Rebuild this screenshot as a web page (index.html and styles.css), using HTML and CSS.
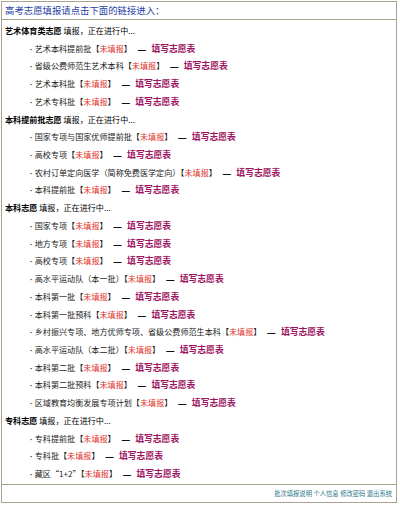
FILE: index.html
```html
<!DOCTYPE html>
<html lang="zh-CN">
<head>
<meta charset="utf-8">
<title>高考志愿填报</title>
<link rel="stylesheet" href="styles.css">
</head>
<body>
<div class="page">
  <div class="head">高考志愿填报请点击下面的链接进入：</div>
  <div class="content">
    <div class="sec"><b>艺术体育类志愿</b> 填报，正在进行中...</div>
    <div class="item"><span class="dot">·</span>艺术本科提前批<span class="br">【</span><span class="st">未填报</span><span class="br">】</span><span class="dash">—</span><a class="fill" href="#">填写志愿表</a></div>
    <div class="item"><span class="dot">·</span>省级公费师范生艺术本科<span class="br">【</span><span class="st">未填报</span><span class="br">】</span><span class="dash">—</span><a class="fill" href="#">填写志愿表</a></div>
    <div class="item"><span class="dot">·</span>艺术本科批<span class="br">【</span><span class="st">未填报</span><span class="br">】</span><span class="dash">—</span><a class="fill" href="#">填写志愿表</a></div>
    <div class="item"><span class="dot">·</span>艺术专科批<span class="br">【</span><span class="st">未填报</span><span class="br">】</span><span class="dash">—</span><a class="fill" href="#">填写志愿表</a></div>

    <div class="sec"><b>本科提前批志愿</b> 填报，正在进行中...</div>
    <div class="item"><span class="dot">·</span>国家专项与国家优师提前批<span class="br">【</span><span class="st">未填报</span><span class="br">】</span><span class="dash">—</span><a class="fill" href="#">填写志愿表</a></div>
    <div class="item"><span class="dot">·</span>高校专项<span class="br">【</span><span class="st">未填报</span><span class="br">】</span><span class="dash">—</span><a class="fill" href="#">填写志愿表</a></div>
    <div class="item"><span class="dot">·</span>农村订单定向医学（简称免费医学定向）<span class="br">【</span><span class="st">未填报</span><span class="br">】</span><span class="dash">—</span><a class="fill" href="#">填写志愿表</a></div>
    <div class="item"><span class="dot">·</span>本科提前批<span class="br">【</span><span class="st">未填报</span><span class="br">】</span><span class="dash">—</span><a class="fill" href="#">填写志愿表</a></div>

    <div class="sec"><b>本科志愿</b> 填报，正在进行中...</div>
    <div class="item"><span class="dot">·</span>国家专项<span class="br">【</span><span class="st">未填报</span><span class="br">】</span><span class="dash">—</span><a class="fill" href="#">填写志愿表</a></div>
    <div class="item"><span class="dot">·</span>地方专项<span class="br">【</span><span class="st">未填报</span><span class="br">】</span><span class="dash">—</span><a class="fill" href="#">填写志愿表</a></div>
    <div class="item"><span class="dot">·</span>高校专项<span class="br">【</span><span class="st">未填报</span><span class="br">】</span><span class="dash">—</span><a class="fill" href="#">填写志愿表</a></div>
    <div class="item"><span class="dot">·</span>高水平运动队（本一批）<span class="br">【</span><span class="st">未填报</span><span class="br">】</span><span class="dash">—</span><a class="fill" href="#">填写志愿表</a></div>
    <div class="item"><span class="dot">·</span>本科第一批<span class="br">【</span><span class="st">未填报</span><span class="br">】</span><span class="dash">—</span><a class="fill" href="#">填写志愿表</a></div>
    <div class="item"><span class="dot">·</span>本科第一批预科<span class="br">【</span><span class="st">未填报</span><span class="br">】</span><span class="dash">—</span><a class="fill" href="#">填写志愿表</a></div>
    <div class="item"><span class="dot">·</span>乡村振兴专项、地方优师专项、省级公费师范生本科<span class="br">【</span><span class="st">未填报</span><span class="br">】</span><span class="dash">—</span><a class="fill" href="#">填写志愿表</a></div>
    <div class="item"><span class="dot">·</span>高水平运动队（本二批）<span class="br">【</span><span class="st">未填报</span><span class="br">】</span><span class="dash">—</span><a class="fill" href="#">填写志愿表</a></div>
    <div class="item"><span class="dot">·</span>本科第二批<span class="br">【</span><span class="st">未填报</span><span class="br">】</span><span class="dash">—</span><a class="fill" href="#">填写志愿表</a></div>
    <div class="item"><span class="dot">·</span>本科第二批预科<span class="br">【</span><span class="st">未填报</span><span class="br">】</span><span class="dash">—</span><a class="fill" href="#">填写志愿表</a></div>
    <div class="item"><span class="dot">·</span>区域教育均衡发展专项计划<span class="br">【</span><span class="st">未填报</span><span class="br">】</span><span class="dash">—</span><a class="fill" href="#">填写志愿表</a></div>

    <div class="sec"><b>专科志愿</b> 填报，正在进行中...</div>
    <div class="item"><span class="dot">·</span>专科提前批<span class="br">【</span><span class="st">未填报</span><span class="br">】</span><span class="dash">—</span><a class="fill" href="#">填写志愿表</a></div>
    <div class="item"><span class="dot">·</span>专科批<span class="br">【</span><span class="st">未填报</span><span class="br">】</span><span class="dash">—</span><a class="fill" href="#">填写志愿表</a></div>
    <div class="item"><span class="dot">·</span>藏区“1+2”<span class="br">【</span><span class="st">未填报</span><span class="br">】</span><span class="dash">—</span><a class="fill" href="#">填写志愿表</a></div>
  </div>
  <div class="foot">
    <a href="#">批次填报说明</a>
    <a href="#">个人信息</a>
    <a href="#">修改密码</a>
    <a href="#">退出系统</a>
  </div>
</div>
</body>
</html>
```

FILE: styles.css
```css
html, body {
  margin: 0;
  padding: 0;
  background: #ffffff;
}

body {
  font-family: "Noto Sans CJK SC", "Noto Sans", sans-serif;
  color: #111111;
}

.page {
  margin: 1px;
  width: 396px;
  height: 502px;
  box-sizing: border-box;
  border: 1px solid #a8a28e;
  display: flex;
  flex-direction: column;
}

.head {
  height: 17px;
  line-height: 17px;
  border-bottom: 1px solid #a8a28e;
  padding-left: 3px;
  font-size: 9.4px;
  color: #1f3ea6;
  white-space: nowrap;
}

.content {
  flex: 1;
  padding-top: 2px;
  border-bottom: 1px solid #a8a28e;
}

.sec,
.item {
  height: 17.72px;
  line-height: 17.72px;
  font-size: 8.1px;
  white-space: nowrap;
}

.sec {
  padding-left: 3px;
  color: #000000;
}

.sec b {
  font-weight: 700;
}

.item {
  padding-left: 28px;
  color: #1a1a1a;
}

.dot {
  font-family: "Liberation Sans", sans-serif;
  font-weight: 700;
  margin-right: 2px;
  color: #333333;
}

.br {
  color: #1a1a1a;
}

.st {
  color: #e0332a;
}

.dash {
  display: inline-block;
  width: 10px;
  margin-left: 5px;
  margin-right: 4.5px;
  font-size: 10px;
  font-weight: 700;
  text-align: center;
  color: #111111;
  vertical-align: top;
  overflow: hidden;
}

.fill {
  font-size: 8.8px;
  font-weight: 700;
  color: #9c1260;
  text-decoration: none;
}

.foot {
  height: 17px;
  line-height: 17px;
  display: flex;
  justify-content: flex-end;
  gap: 1.5px;
  padding-right: 4px;
  font-size: 6.3px;
  white-space: nowrap;
}

.foot a {
  color: #2a7888;
  text-decoration: none;
}
```
